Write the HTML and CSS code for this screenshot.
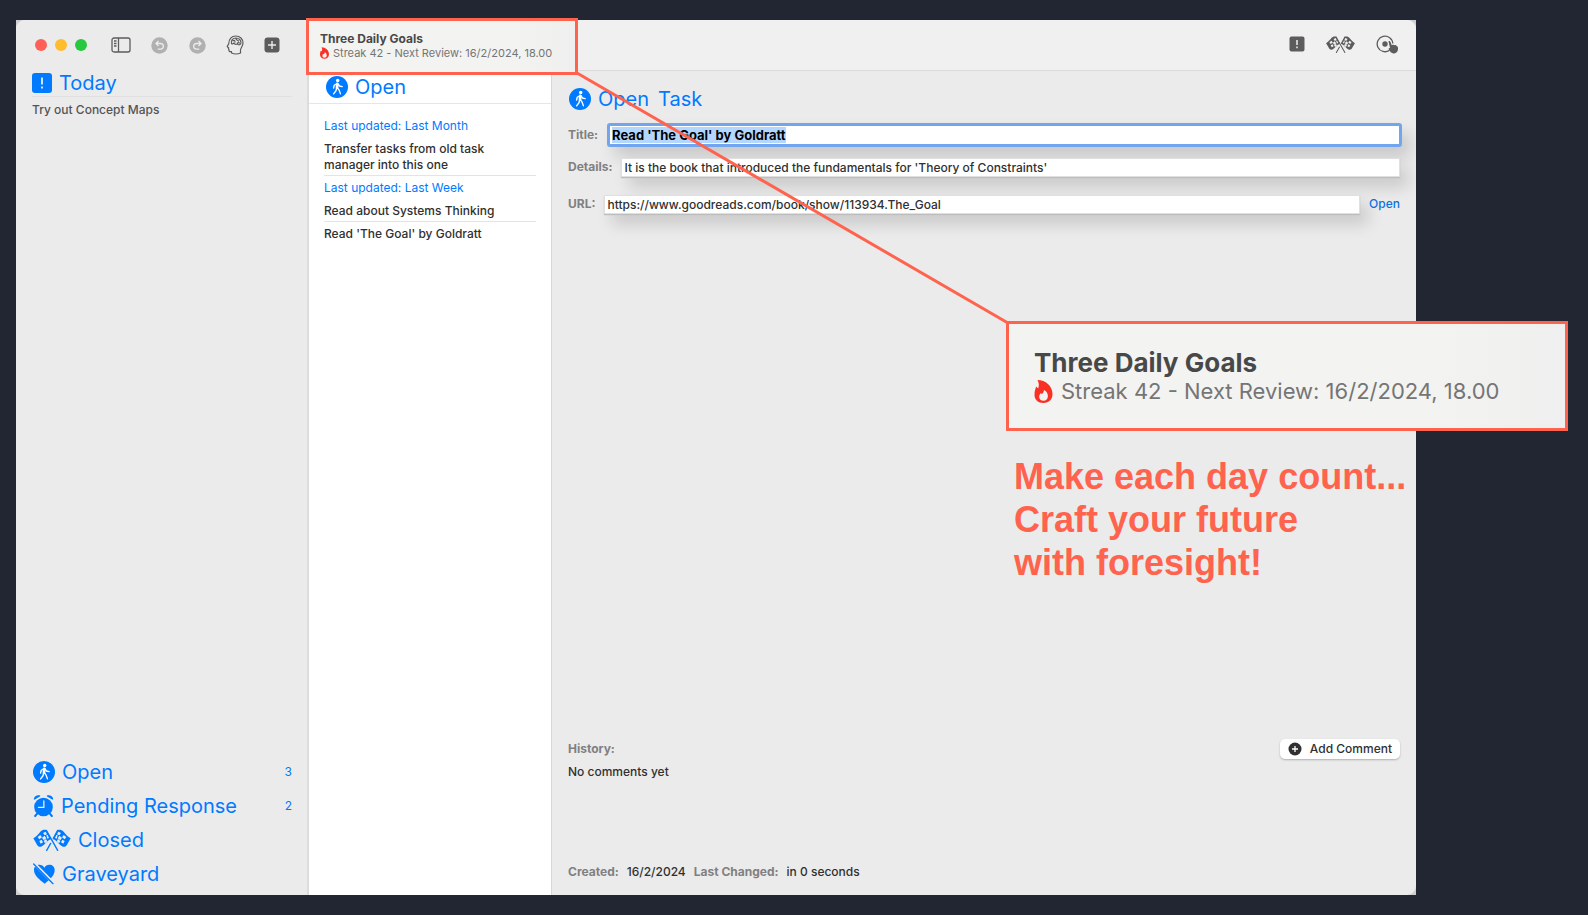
FILE: index.html
```html
<!DOCTYPE html>
<html lang="en">
<head>
<meta charset="utf-8">
<title>Three Daily Goals</title>
<link rel="stylesheet" href="styles.css">
</head>
<body>
<svg class="sprite" aria-hidden="true">
  <symbol id="walk" viewBox="0 0 64 64">
    <circle cx="32" cy="32" r="32" fill="currentColor"/>
    <circle cx="34" cy="13" r="5" fill="#fff"/>
    <g fill="none" stroke="#fff" stroke-linecap="round" stroke-linejoin="round">
      <path d="M33 23 L32 34" stroke-width="8"/>
      <path d="M33 34 L38 41 L42 52 M31 35 L29 43 L22 52 M32 22 L24 27 L22 35 M35 23 L39 29 L47 31" stroke-width="4"/>
    </g>
  </symbol>
  <symbol id="flags" viewBox="0 0 112 66">
    <g fill="currentColor" fill-rule="evenodd">
      <path d="M0 28C9 23 14 16 21 8C27 2 33 1 39 3L54 31C45 30 38 46 23 53C17 54 13 51 11 47ZM13 24l8-6 5 7-8 6zM29 12l8-4 4 8-7 3zM26 26l8-6 5 8-8 6zM39 18l4 0 4 9-5 2zM18 36l7-4 4 8-7 4zM31 36l7-6 4 7-7 6z"/>
      <path d="M112 28C103 23 98 16 91 8C85 2 79 1 73 3L58 31C67 30 74 46 89 53C95 54 99 51 101 47ZM99 24l-8-6-5 7 8 6zM83 12l-8-4-4 8 7 3zM86 26l-8-6-5 8 8 6zM73 18l-4 0-4 9 5 2zM94 36l-7-4-4 8 7 4zM81 36l-7-6-4 7 7 6z"/>
    </g>
    <path d="M39 4L73 64M73 4L60 28M52 43L40 64" fill="none" stroke="currentColor" stroke-width="4" stroke-linecap="round"/>
  </symbol>
  <symbol id="flame" viewBox="0 0 18 23">
    <path d="M3 0C11 0 18 6 18 14C18 19.500 14.500 23 9 23C3.500 23 0 19.500 0 15C0 11 .8 9 1.800 6.500C2.400 7.500 3 8 3.700 8.300C4.800 5.500 4.500 3 3 0ZM9.500 10C9.300 12 8.500 13 7.300 14.200L6.400 13C5.200 14.500 4.700 15.500 4.700 16.800C4.700 19.300 6.500 20.800 9 20.800C11.600 20.800 13.400 19 13.400 16.300C13.400 13.500 12 11 9.500 10Z" fill="#fb3024" fill-rule="evenodd"/>
  </symbol>
</svg>

<div class="stage">
  <div class="frame">
    <main class="window">
      <aside class="sidebar">
        <div class="toolbar">
          <div class="lights"><i class="light red"></i><i class="light amber"></i><i class="light green"></i></div>
          <button class="tool" aria-label="Toggle sidebar"><svg width="20" height="16" viewBox="0 0 20 16" fill="none" stroke="currentColor" stroke-width="1.300"><rect x="1" y="1" width="18" height="14" rx="2"/><path d="M7.500 1V15M3 4H5.500M3 6.500H5.500M3 9H5.500" /></svg></button>
          <button class="tool faded" aria-label="Undo"><svg width="17" height="17" viewBox="0 0 17 17"><circle cx="8.500" cy="8.500" r="8.200" fill="currentColor"/><path d="M7.500 4L5 6.500L7.500 9M5.200 6.500H9.500A2.800 2.800 0 0 1 9.500 12.200H6.800" fill="none" stroke="#ececec" stroke-width="1.300"/></svg></button>
          <button class="tool faded" aria-label="Redo"><svg width="17" height="17" viewBox="0 0 17 17"><circle cx="8.500" cy="8.500" r="8.200" fill="currentColor"/><path d="M9.500 4L12 6.500L9.500 9M11.800 6.500H7.500A2.800 2.800 0 0 0 7.500 12.200H10.200" fill="none" stroke="#ececec" stroke-width="1.300"/></svg></button>
          <button class="tool" aria-label="Review"><svg width="18" height="20" viewBox="0 0 18 20" fill="none" stroke="currentColor" stroke-width="1.200" stroke-linejoin="round" stroke-linecap="round"><path d="M5.500 18V16.500C3.500 17 2.800 16.300 3 14.800C2.400 14.300 2.200 13.800 2.700 13L1.200 11.600L2.800 8.500C2.800 4 5.500 1 9.800 1C14 1 17 4 17 8C17 11 15 12.500 14.600 14.500C14.300 16 14.600 17 14.600 18Q10 20 5.500 18Z"/><path d="M5.500 8.500C4.500 5.500 7 3 9.800 3C13 3 15.200 5.200 15 8C14.800 10 12.500 10.300 11.500 9C10 9.500 8.500 9.200 8 8C7 9 6 9 5.500 8.500ZM7 5.800C8 5 9 5.500 9 7M10 3.500C9.800 5 11.500 5 12.500 6M11.500 9C11 8 12 7 13.500 8"/></svg></button>
          <button class="tool" aria-label="Add task"><svg width="16" height="16" viewBox="0 0 16 16"><rect x=".5" y=".5" width="15" height="15" rx="3" fill="currentColor"/><path d="M8 4V12M4 8H12" stroke="#ececec" stroke-width="1.400"/></svg></button>
        </div>
        <section class="today">
          <h2 class="heading"><svg width="20" height="20" viewBox="0 0 20 20"><rect width="20" height="20" rx="3" fill="currentColor"/><path d="M10 4.500V11.500M10 13.500V15.500" stroke="#fff" stroke-width="1.600"/></svg>Today</h2>
          <p class="today-task">Try out Concept Maps</p>
        </section>
        <nav class="groups">
          <a class="group" href="#open"><svg width="22" height="22"><use href="#walk"/></svg><span>Open</span><span class="count">3</span></a>
          <a class="group" href="#pending"><svg width="21" height="22" viewBox="0 0 60 66"><circle cx="30" cy="36" r="28" fill="currentColor"/><path d="M3 12A12 12 0 0 1 18 3ZM57 12A12 12 0 0 0 42 3Z" fill="currentColor" stroke="currentColor" stroke-width="4" stroke-linejoin="round"/><path d="M11 56L5 63M49 56L55 63" stroke="currentColor" stroke-width="6" stroke-linecap="round"/><path d="M31 18V37H15" fill="none" stroke="#ececec" stroke-width="4" stroke-linecap="round"/></svg><span>Pending Response</span><span class="count">2</span></a>
          <a class="group" href="#closed"><svg width="38" height="22"><use href="#flags"/></svg><span>Closed</span></a>
          <a class="group" href="#graveyard"><svg width="22" height="22" viewBox="0 0 66 64"><path d="M35 61C18 48 3 36 3 20C3 10 10 4 19 4C26 4 31 7 34 13C37 7 42 4 49 4C58 4 65 10 65 20C65 36 52 48 35 61Z" fill="currentColor"/><path d="M3 0L64 62" stroke="#ececec" stroke-width="9"/><path d="M2 2L60 61" stroke="currentColor" stroke-width="4" stroke-linecap="round"/></svg><span>Graveyard</span></a>
        </nav>
      </aside>

      <div class="content">
        <header class="topbar">
          <button class="tool" aria-label="Mark as important"><svg width="16" height="16" viewBox="0 0 16 16"><rect x=".5" y=".5" width="15" height="15" rx="2" fill="currentColor"/><path d="M8 4V9M8 10.500V12.200" stroke="#efefef" stroke-width="1.500"/></svg></button>
          <button class="tool" aria-label="Close task"><svg width="29" height="17"><use href="#flags"/></svg></button>
          <button class="tool" aria-label="Touch task"><svg width="23" height="19" viewBox="0 0 23 19"><path d="M13.500 15.300A7.800 7.800 0 1 1 16.800 8.500" fill="none" stroke="currentColor" stroke-width="1.300"/><circle cx="9" cy="9" r="2.700" fill="currentColor"/><path d="M12.500 6.200C13.500 5.600 14.200 6.200 14.600 7.200L15.800 10.200C17 9.400 18 9.600 18.600 10.200C19.600 9.800 20.200 10.200 20.600 10.900C22 11 22.300 13 21.900 15C21.400 17.500 19.500 18.500 17.500 18.400C15.500 18.300 14 16.700 12.800 14.500C12.300 13.500 13 12.600 14 13Z" fill="currentColor"/></svg></button>
        </header>
        <section class="list">
          <h2 class="heading list-heading"><svg width="22" height="22"><use href="#walk"/></svg>Open</h2>
          <div class="list-body">
            <h3 class="updated">Last updated: Last Month</h3>
            <p class="task">Transfer tasks from old task manager into this one</p>
            <h3 class="updated">Last updated: Last Week</h3>
            <p class="task">Read about Systems Thinking</p>
            <p class="task last">Read 'The Goal' by Goldratt</p>
          </div>
        </section>
        <section class="detail">
          <h1 class="heading detail-heading"><svg width="22" height="22"><use href="#walk"/></svg><span>Open</span><span>Task</span></h1>
          <form class="form">
            <div class="field"><label for="title">Title:</label><input class="box title-box" id="title" type="text" value="Read 'The Goal' by Goldratt"></div>
            <div class="field"><label for="details">Details:</label><input class="box" id="details" type="text" value="It is the book that introduced the fundamentals for 'Theory of Constraints'"></div>
            <div class="field url-field"><label for="url">URL:</label><input class="box" id="url" type="text" value="https://www.goodreads.com/book/show/113934.The_Goal"><a class="open-link" href="#url">Open</a></div>
          </form>
          <div class="history">
            <div class="history-head"><h3 class="caption">History:</h3>
              <button class="add"><svg width="14" height="14" viewBox="0 0 14 14"><circle cx="7" cy="7" r="6.500" fill="currentColor"/><path d="M7 4V10M4 7H10" stroke="#fff" stroke-width="1.300"/></svg>Add Comment</button></div>
            <p>No comments yet</p>
          </div>
          <footer class="dates"><span class="caption">Created:</span><span>16/2/2024</span><span class="caption">Last Changed:</span><span>in 0 seconds</span></footer>
        </section>
      </div>
    </main>
  </div>

  <div class="spot">
    <strong class="spot-title">Three Daily Goals</strong>
    <span class="spot-streak"><svg width="9" height="12"><use href="#flame"/></svg>Streak 42 - Next Review: 16/2/2024, 18.00</span>
  </div>
  <svg class="leader" width="434" height="254" viewBox="0 0 434 254" aria-hidden="true"><path d="M1 2L432 252" stroke="#ff634d" stroke-width="3"/></svg>
  <div class="callout">
    <strong class="callout-title">Three Daily Goals</strong>
    <span class="callout-streak"><svg width="19" height="23"><use href="#flame"/></svg>Streak 42 - Next Review: 16/2/2024, 18.00</span>
  </div>
  <p class="slogan">Make each day count...<br>Craft your future<br>with foresight!</p>
</div>
<script>
  document.getElementById("title").select();
</script>
</body>
</html>
```
FILE: styles.css
```css
* { box-sizing: border-box; }
body {
  margin: 0;
  background: #222632;
  color: #303030;
  font: 500 12px/16px Inter, "Liberation Sans", sans-serif;
}
h1, h2, h3, p { margin: 0; font-size: inherit; font-weight: inherit; }
svg { flex: none; display: block; }
a { color: inherit; text-decoration: none; }
button { border: 0; padding: 0; background: none; font: inherit; color: inherit; }
.sprite { position: absolute; width: 0; height: 0; }

.stage { position: relative; min-height: 100vh; display: flex; padding: 20px 172px 20px 16px; }
.frame { flex: 1; display: flex; background: #cfccd2; }
.window {
  flex: 1;
  display: grid;
  grid-template-columns: 293px 1fr;
  background: #ebebeb;
  border-radius: 9px;
  overflow: hidden;
}

.sidebar { display: flex; flex-direction: column; border-right: 2px solid #dcdcdc; background: #ebebeb; }
.toolbar { display: flex; align-items: center; justify-content: space-between; height: 50px; padding: 0 27px 0 19px; }
.lights { display: flex; gap: 8px; margin-right: 4px; }
.light { width: 12px; height: 12px; border-radius: 50%; }
.red { background: #ff5f57; }
.amber { background: #febc2e; }
.green { background: #28c840; }
.tool { color: #5c5c5c; }
.faded { color: #b0b0b0; }

.heading { display: flex; align-items: center; gap: 7px; color: #007aff; font-size: 20px; font-weight: 400; line-height: 26px; }
.today { padding: 0 15px 0 16px; }
.today .heading { border-bottom: 1px solid #e0e0e0; }
.today-task { padding-top: 5px; color: #545454; }
.groups { margin-top: auto; padding: 0 15px 4px 17px; color: #007aff; }
.group { display: flex; align-items: center; gap: 7px; height: 34px; font-size: 20px; font-weight: 400; }
.count { margin-left: auto; font-size: 12px; }

.content { display: grid; grid-template-columns: 243px 1fr; grid-template-rows: 51px 1fr; }
.topbar {
  grid-column: 1 / -1;
  display: flex;
  align-items: center;
  justify-content: flex-end;
  gap: 21px;
  padding: 0 17px 2px;
  background: #f0f0f0;
  border-bottom: 1px solid #dadada;
}
.list { background: #fff; border-right: 1px solid #d8d8d8; }
.list-heading { height: 33px; padding: 0 17px; border-bottom: 1px solid #e6e6e6; }
.list-body { padding: 10px 15px; }
.updated { padding: 4px 0 3px; color: #007aff; font-weight: 400; }
.task { padding: 4px 12px 2px 0; border-bottom: 1px solid #e4e4e4; }
.last { border: 0; }

.detail { display: flex; flex-direction: column; padding: 15px 16px; }
.detail-heading { padding-left: 1px; }
.detail-heading span + span { margin-left: 2px; }
.form { display: flex; flex-direction: column; padding-top: 11px; }
.field { display: flex; align-items: center; height: 24px; gap: 9px; margin-bottom: 8px; }
.field label, .caption { color: #808080; font-weight: 700; }
.url-field { margin-top: 5px; }
.box {
  flex: 1;
  min-width: 0;
  height: 19px;
  padding: 0 2px;
  border: 1px solid #e0e0e0;
  border-radius: 0;
  background: #fff;
  color: #303030;
  font: inherit;
  outline: 0;
  box-shadow: 0 1px 1px #bdbdbd, 8px 10px 16px rgba(0, 0, 0, 0.15);
}
.title-box {
  height: 24px;
  margin-right: -2px;
  border: 3px solid #73a5ee;
  border-radius: 3px;
  font-size: 13px;
  font-weight: 700;
  box-shadow: 8px 10px 16px rgba(0, 0, 0, 0.15);
}
.title-box::selection { background: #b3d7ff; color: #000; }
.open-link { color: #0b72df; }
.history { margin-top: auto; }
.history-head { display: flex; align-items: center; justify-content: space-between; height: 20px; margin-bottom: 5px; }
.add {
  display: flex;
  align-items: center;
  gap: 8px;
  height: 20px;
  padding: 0 8px;
  border-radius: 5px;
  background: #fff;
  box-shadow: 0 1px 2px rgba(0, 0, 0, 0.25);
}
.dates { display: flex; gap: 8px; margin-top: 84px; }

/* Annotations floating over the window */
.spot, .callout {
  position: absolute;
  display: flex;
  flex-direction: column;
  justify-content: center;
  border: 3px solid #ff634d;
  background: linear-gradient(90deg, #f3f3f1 75%, #efefef);
  color: #757575;
  font-weight: 400;
  white-space: nowrap;
}
.spot { left: 306px; top: 18px; width: 272px; height: 57px; padding: 0 11px 2px; font-size: 11px; line-height: 14px; }
.spot-title { color: #484848; font-size: 12px; }
.spot-streak { display: flex; align-items: center; gap: 4px; }
.leader { position: absolute; left: 576px; top: 71px; }
.callout { left: 1006px; top: 321px; width: 562px; height: 110px; padding: 2px 25px 0; font-size: 22px; line-height: 28px; }
.callout-title { color: #484848; font-size: 26px; }
.callout-streak { display: flex; align-items: center; gap: 8px; }
.slogan {
  position: absolute;
  left: 1014px;
  top: 455px;
  color: #ff634d;
  font: bold 36px/43px "Liberation Sans", Arial, sans-serif;
  white-space: nowrap;
}
```
